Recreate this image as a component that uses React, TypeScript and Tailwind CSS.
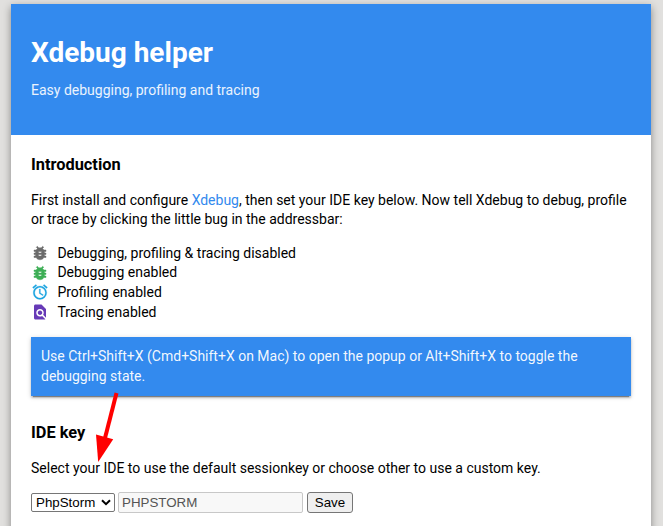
import React from 'react';

function BugIcon({ color }: { color: string }) {
  return (
    <svg width="18" height="18" viewBox="0 0 24 24" fill={color} stroke={color} strokeWidth="0.6">
      <path d="M20 8h-2.81c-.45-.78-1.07-1.45-1.82-1.96L17 4.41 15.59 3l-2.17 2.17C12.96 5.06 12.49 5 12 5s-.96.06-1.41.17L8.41 3 7 4.41l1.62 1.63C7.88 6.55 7.26 7.22 6.81 8H4v2h2.09c-.05.33-.09.66-.09 1v1H4v2h2v1c0 .34.04.67.09 1H4v2h2.81c1.04 1.79 2.97 3 5.19 3s4.15-1.21 5.19-3H20v-2h-2.09c.05-.33.09-.66.09-1v-1h2v-2h-2v-1c0-.34-.04-.67-.09-1H20V8zm-6 8h-4v-2h4v2zm0-4h-4v-2h4v2z" />
    </svg>
  );
}

function ClockIcon() {
  return (
    <svg width="18" height="18" viewBox="0 0 24 24" fill="#1aa3e0" stroke="#1aa3e0" strokeWidth="0.3">
      <path d="M22 5.72l-4.6-3.86-1.29 1.53 4.6 3.86L22 5.72zM7.88 3.39L6.6 1.86 2 5.71l1.29 1.53 4.59-3.85zM12.5 8H11v6l4.75 2.85.75-1.23-4-2.37V8zM12 4c-4.97 0-9 4.03-9 9s4.02 9 9 9a9 9 0 0 0 0-18zm0 16c-3.87 0-7-3.13-7-7s3.13-7 7-7 7 3.13 7 7-3.13 7-7 7z" />
    </svg>
  );
}

function TraceIcon() {
  return (
    <svg width="18" height="18" viewBox="0 0 24 24" fill="#673ab7">
      <path d="M20 19.59V8l-6-6H6c-1.1 0-1.99.9-1.99 2L4 20c0 1.1.89 2 1.99 2H18c.45 0 .85-.15 1.19-.4l-4.43-4.43c-.8.52-1.74.83-2.76.83-2.76 0-5-2.24-5-5s2.24-5 5-5 5 2.24 5 5c0 1.02-.31 1.96-.83 2.75L20 19.59zM9 13c0 1.66 1.34 3 3 3s3-1.34 3-3-1.34-3-3-3-3 1.34-3 3z" />
    </svg>
  );
}

const states = [
  { icon: <BugIcon color="#6b6b6b" />, label: 'Debugging, profiling & tracing disabled' },
  { icon: <BugIcon color="#3dae55" />, label: 'Debugging enabled' },
  { icon: <ClockIcon />, label: 'Profiling enabled' },
  { icon: <TraceIcon />, label: 'Tracing enabled' },
];

export default function App() {
  return (
    <div className="relative h-[526px] w-[663px] overflow-hidden bg-[#e1e0de] pl-[11px] pt-1 font-['Roboto',sans-serif] text-[14px] leading-[19.6px] text-black">
      <main className="h-[560px] w-[640px] bg-white shadow-[0_3px_8px_rgba(0,0,0,0.4)]">
        <header className="h-[131px] bg-[#338aee] px-5 pt-[31px] text-white">
          <h1 className="text-[28px] font-bold leading-[36px]">Xdebug helper</h1>
          <p className="mt-[10px] text-white/90">Easy debugging, profiling and tracing</p>
        </header>
        <div className="px-5 pt-[19px]">
          <h2 className="text-[16.38px] font-bold leading-[22px]">Introduction</h2>
          <p className="mt-[14.5px] whitespace-nowrap">
            First install and configure <a className="text-[#338aee]">Xdebug</a>, then set your IDE key below. Now tell Xdebug to debug, profile<br />
            or trace by clicking the little bug in the addressbar:
          </p>
          <ul className="mt-[14.15px]">
            {states.map((s) => (
              <li key={s.label} className="flex h-[19.6px] items-center">
                <span className="mb-[1.2px] mr-[8.4px]">{s.icon}</span>
                {s.label}
              </li>
            ))}
          </ul>
          <div className="mt-[14.85px] h-[59px] bg-[#338aee] px-[10px] pt-[10px] text-white/95 shadow-[0_2px_2px_rgba(0,0,0,0.18),0_3px_1px_-2px_rgba(0,0,0,0.35),0_1px_5px_rgba(0,0,0,0.16)]">
            Use Ctrl+Shift+X (Cmd+Shift+X on Mac) to open the popup or Alt+Shift+X to toggle the<br />debugging state.
          </div>
          <h2 className="mt-[25.5px] text-[16.38px] font-bold leading-[22px]">IDE key</h2>
          <p className="mt-[15px]">Select your IDE to use the default sessionkey or choose other to use a custom key.</p>
          <form className="mt-[14px] flex items-center font-['Liberation_Sans',sans-serif] text-[13.33px] leading-[15px]">
            <div className="flex h-[19px] w-[84px] items-center justify-between rounded-[2px] border border-[#767676] bg-white pl-1 pr-[3px]">
              PhpStorm
              <svg width="10" height="7" viewBox="0 0 10 7" fill="none" stroke="#000" strokeWidth="2"><path d="M1 1.2 5 5.2 9 1.2" /></svg>
            </div>
            <div className="ml-[3px] h-[21px] w-[185px] rounded-[2px] border border-[#c8c8c8] bg-[#f8f8f8] px-[3px] pt-[2px] text-[#545454]">PHPSTORM</div>
            <button className="ml-1 h-[21px] w-[46px] rounded-[3px] border border-[#767676] bg-[#efefef]">Save</button>
          </form>
        </div>
      </main>
      <svg className="absolute left-0 top-0" width="663" height="526">
        <path d="M116.5 393 104.5 440" stroke="#f00" strokeWidth="4" />
        <path d="M98.2 462 96 434.5 113.2 439.2Z" fill="#f00" />
      </svg>
    </div>
  );
}
